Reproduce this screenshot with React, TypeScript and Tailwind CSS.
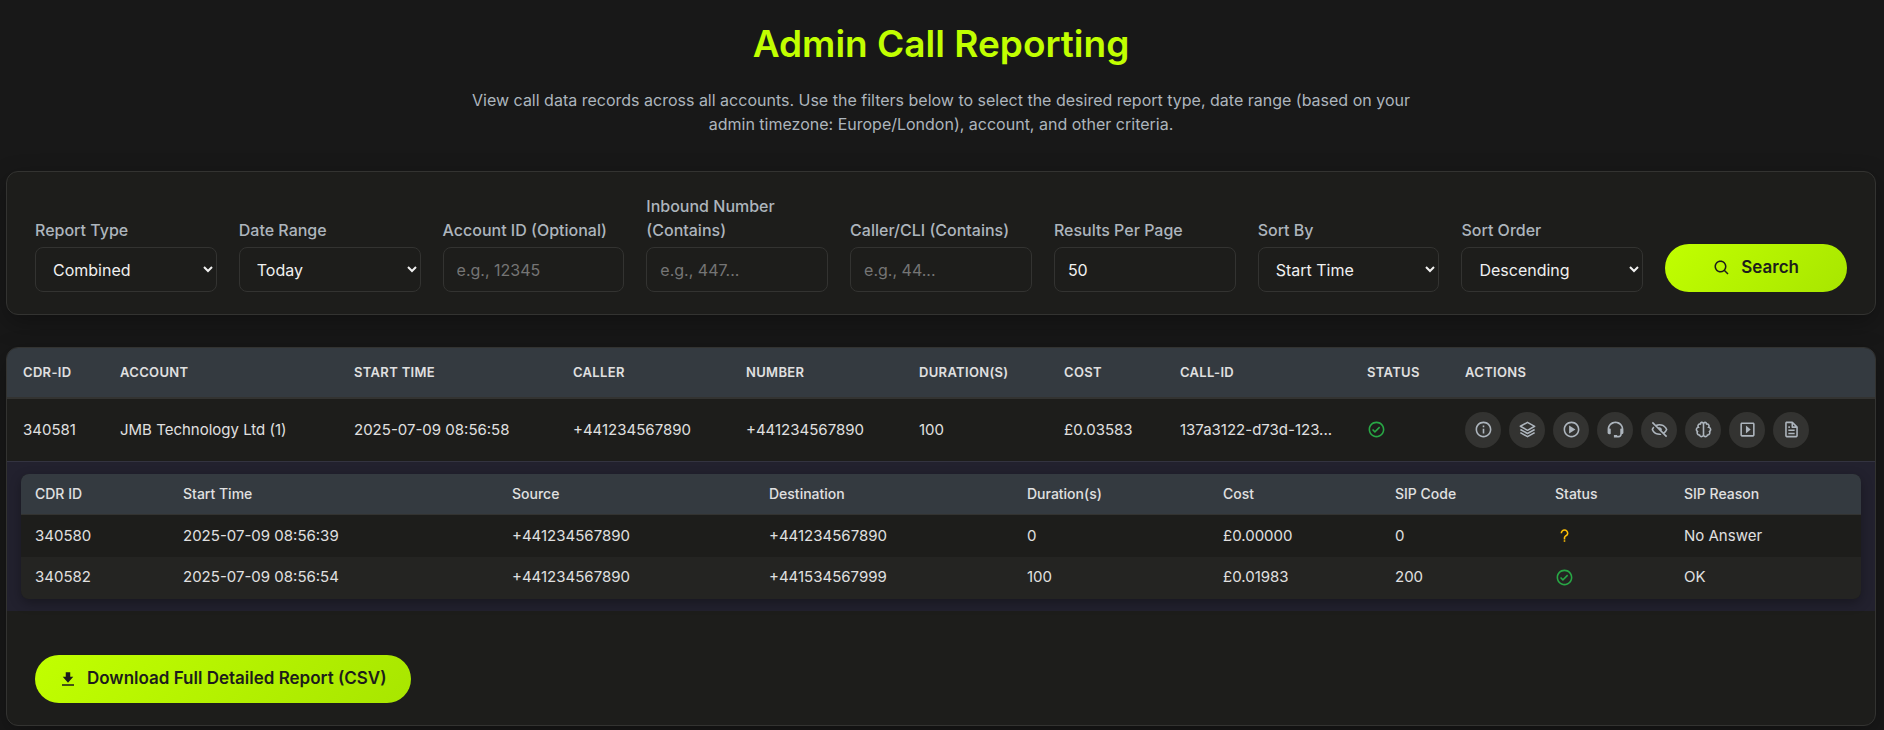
import type { ReactNode } from "react";
import {
  BiBrain,
  BiCaretRightSquare,
  BiCheckCircle,
  BiFile,
  BiHide,
  BiInfoCircle,
  BiLayer,
  BiPlayCircle,
  BiQuestionMark,
  BiSearch,
  BiSolidDownload,
  BiSupport,
} from "react-icons/bi";

const fieldClass =
  "h-[45px] w-full rounded-lg border border-[#333331] bg-[#1d1d1b] text-base text-[#f0f0f0] placeholder:text-[#757575] outline-none focus:border-[#c1ff00]";

const buttonClass =
  "inline-flex h-12 items-center justify-center gap-2.5 rounded-full bg-linear-135 from-[#c1ff00] to-[#a8e600] text-[17px] font-semibold text-[#1d1d1b]";

const columns = [
  { title: "CDR-ID", width: "w-[97px]" },
  { title: "Account", width: "w-[234px]" },
  { title: "Start Time", width: "w-[219px]" },
  { title: "Caller", width: "w-[173px]" },
  { title: "Number", width: "w-[173px]" },
  { title: "Duration(s)", width: "w-[145px]" },
  { title: "Cost", width: "w-[116px]" },
  { title: "Call-ID", width: "w-[187px]" },
  { title: "Status", width: "w-[98px]" },
  { title: "Actions", width: "w-auto" },
];

const legColumns = [
  { title: "CDR ID", width: "w-[148px]" },
  { title: "Start Time", width: "w-[329px]" },
  { title: "Source", width: "w-[257px]" },
  { title: "Destination", width: "w-[258px]" },
  { title: "Duration(s)", width: "w-[196px]" },
  { title: "Cost", width: "w-[172px]" },
  { title: "SIP Code", width: "w-[160px]" },
  { title: "Status", width: "w-[129px]" },
  { title: "SIP Reason", width: "w-auto" },
];

const record = [
  "340581",
  "JMB Technology Ltd (1)",
  "2025-07-09 08:56:58",
  "+441234567890",
  "+441234567890",
  "100",
  "£0.03583",
  "137a3122-d73d-123...",
];

const legs = [
  {
    cells: ["340580", "2025-07-09 08:56:39", "+441234567890", "+441234567890", "0", "£0.00000", "0"],
    answered: false,
    reason: "No Answer",
  },
  {
    cells: ["340582", "2025-07-09 08:56:54", "+441234567890", "+441534567999", "100", "£0.01983", "200"],
    answered: true,
    reason: "OK",
  },
];

const actions = [
  { label: "Details", icon: BiInfoCircle },
  { label: "Call legs", icon: BiLayer },
  { label: "Play recording", icon: BiPlayCircle },
  { label: "Agent", icon: BiSupport },
  { label: "Hide", icon: BiHide },
  { label: "AI analysis", icon: BiBrain },
  { label: "Open player", icon: BiCaretRightSquare },
  { label: "Transcript", icon: BiFile },
];

function Field({ id, label, children }: { id: string; label: string; children: ReactNode }) {
  return (
    <div className="min-w-0">
      <label htmlFor={id} className="mb-[5px] block text-base leading-6 font-medium text-[#adb5bd]">
        {label}
      </label>
      {children}
    </div>
  );
}

function SelectField({ id, label, options }: { id: string; label: string; options: string[] }) {
  return (
    <Field id={id} label={label}>
      <select id={id} className={`${fieldClass} pl-[13px]`}>
        {options.map((option) => (
          <option key={option}>{option}</option>
        ))}
      </select>
    </Field>
  );
}

function StatusIcon({ answered }: { answered: boolean }) {
  return answered ? (
    <BiCheckCircle size={19} className="text-[#28a745]" />
  ) : (
    <BiQuestionMark size={19} className="text-[#ffc107]" />
  );
}

export default function App() {
  return (
    <main className="min-h-screen bg-[#181818] pr-2 pb-1 pl-1.5 font-['Inter',sans-serif] text-[#e0e0e0]">
      <header className="mx-auto max-w-[980px] pt-5 text-center">
        <h1 className="text-[37px] leading-12 font-semibold text-[#c1ff00]">Admin Call Reporting</h1>
        <p className="mt-5 text-base leading-6 text-[#adb5bd]">
          View call data records across all accounts. Use the filters below to select the desired report type, date
          range (based on your admin timezone: Europe/London), account, and other criteria.
        </p>
      </header>

      {/* Filters */}
      <form
        className="mt-[35px] grid grid-cols-9 items-end gap-[22px] rounded-xl border border-[#333331] bg-[#1d1d1b] px-7 py-[22px] shadow-[0_8px_25px_rgba(0,0,0,0.3)]"
        onSubmit={(e) => e.preventDefault()}
      >
        <SelectField id="report-type" label="Report Type" options={["Combined", "Inbound", "Outbound"]} />
        <SelectField id="date-range" label="Date Range" options={["Today", "Yesterday", "Last 7 Days"]} />
        <Field id="account-id" label="Account ID (Optional)">
          <input id="account-id" type="text" placeholder="e.g., 12345" className={`${fieldClass} px-[13px]`} />
        </Field>
        <Field id="inbound-number" label="Inbound Number (Contains)">
          <input id="inbound-number" type="text" placeholder="e.g., 447..." className={`${fieldClass} px-[13px]`} />
        </Field>
        <Field id="caller" label="Caller/CLI (Contains)">
          <input id="caller" type="text" placeholder="e.g., 44..." className={`${fieldClass} px-[13px]`} />
        </Field>
        <Field id="per-page" label="Results Per Page">
          <input id="per-page" type="text" inputMode="numeric" defaultValue="50" className={`${fieldClass} px-[13px]`} />
        </Field>
        <SelectField id="sort-by" label="Sort By" options={["Start Time", "Duration", "Cost"]} />
        <SelectField id="sort-order" label="Sort Order" options={["Descending", "Ascending"]} />
        <button type="submit" className={buttonClass}>
          <BiSearch size={18} />
          Search
        </button>
      </form>

      {/* Results */}
      <section className="mt-8 overflow-hidden rounded-xl border border-[#333331] bg-[#1d1d1b] shadow-[0_8px_25px_rgba(0,0,0,0.3)]">
        <table className="w-full table-fixed border-collapse text-left">
          <thead className="bg-[#343a40]">
            <tr className="h-[50px] border-b-2 border-[#333331]">
              {columns.map(({ title, width }) => (
                <th key={title} className={`${width} pl-4 text-[13px] font-semibold tracking-wide uppercase`}>
                  {title}
                </th>
              ))}
            </tr>
          </thead>
          <tbody>
            <tr className="h-[63px] border-b border-[#333340]">
              {record.map((value, index) => (
                <td key={index} className="pl-4 text-[15px] whitespace-nowrap">
                  {value}
                </td>
              ))}
              <td className="pl-4">
                <StatusIcon answered />
              </td>
              <td className="pl-4">
                <div className="flex gap-2">
                  {actions.map(({ label, icon: Icon }) => (
                    <button
                      key={label}
                      type="button"
                      aria-label={label}
                      className="flex size-9 items-center justify-center rounded-full bg-[#333331] text-[#adb5bd]"
                    >
                      <Icon size={19} />
                    </button>
                  ))}
                </div>
              </td>
            </tr>
            <tr>
              <td colSpan={10} className="bg-[#22212e] px-3.5 py-3">
                <div className="overflow-hidden rounded-lg bg-[#1d1d1b] shadow-[0_4px_12px_rgba(0,0,0,0.3)]">
                  <table className="w-full table-fixed border-collapse">
                    <thead className="bg-[#343a40]">
                      <tr className="h-[41px] border-b border-[#333331]">
                        {legColumns.map(({ title, width }) => (
                          <th key={title} className={`${width} pl-3.5 text-sm font-medium`}>
                            {title}
                          </th>
                        ))}
                      </tr>
                    </thead>
                    <tbody>
                      {legs.map(({ cells, answered, reason }) => (
                        <tr key={cells[0]} className="h-[42px] text-[15px] even:bg-[#242422]">
                          {cells.map((value, index) => (
                            <td key={index} className="pl-3.5">
                              {value}
                            </td>
                          ))}
                          <td className="pl-3.5">
                            <StatusIcon answered={answered} />
                          </td>
                          <td className="pl-3.5">{reason}</td>
                        </tr>
                      ))}
                    </tbody>
                  </table>
                </div>
              </td>
            </tr>
          </tbody>
        </table>

        <div className="px-7 pt-11 pb-[22px]">
          <button type="button" className={`${buttonClass} px-6`}>
            <BiSolidDownload size={18} />
            Download Full Detailed Report (CSV)
          </button>
        </div>
      </section>
    </main>
  );
}
